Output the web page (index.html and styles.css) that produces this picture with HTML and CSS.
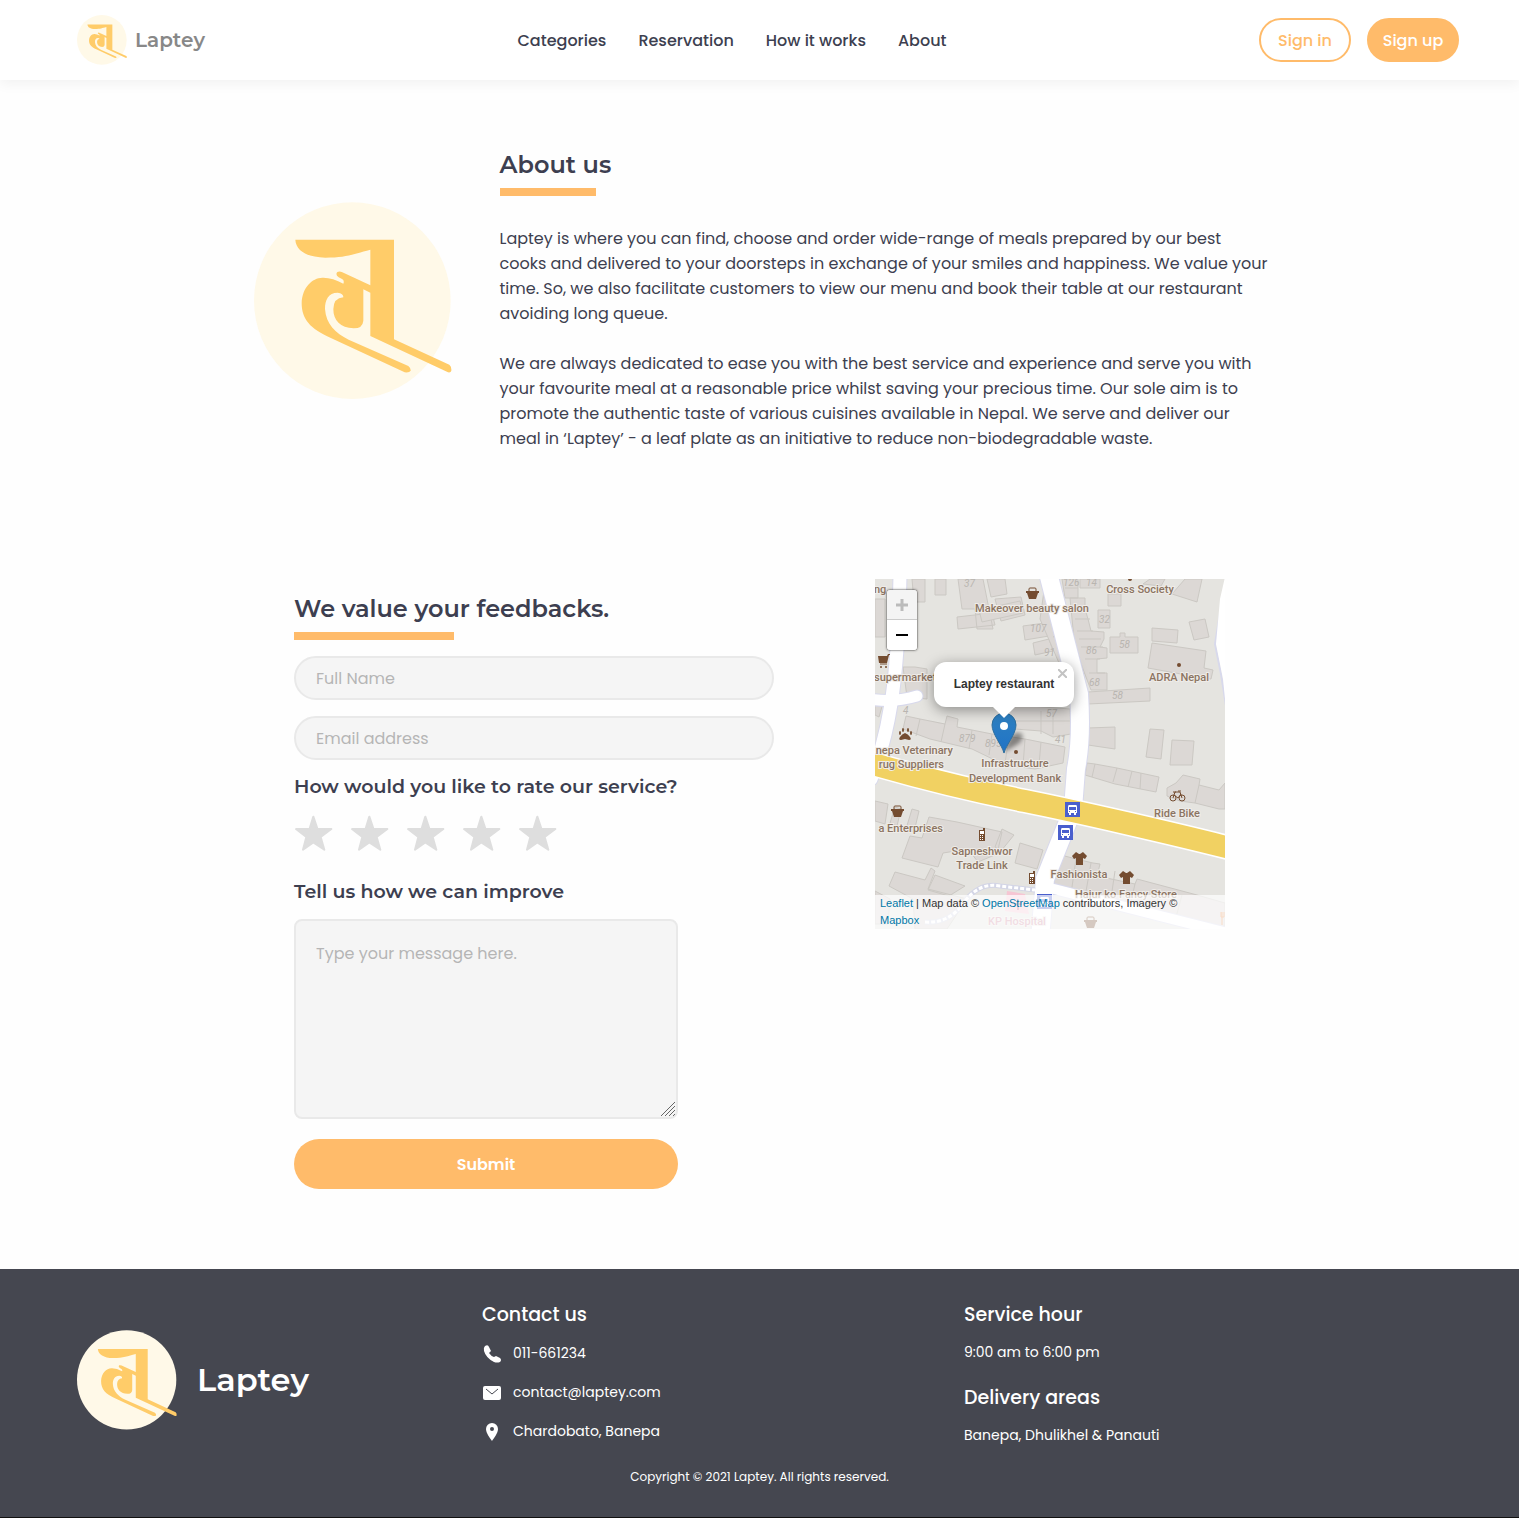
FILE: index.html
```html
<!DOCTYPE html>
<html lang="en">
<head>
<meta charset="utf-8">
<meta name="viewport" content="width=device-width, initial-scale=1">
<title>Laptey | About us</title>
<link rel="stylesheet" href="styles.css">
</head>
<body>
<svg class="sprite" aria-hidden="true">
  <symbol id="logo" viewBox="41 36 594 590">
    <circle cx="336" cy="330" r="295" fill="#fff9e8"/>
    <path fill="#ffcc69" d="M165 147H461V446L627 522Q634 527 633 540Q631 547 623 545L390 436V306L369 296V390Q367 413 340 413C300 411 279 390 279 355Q280 322 309 320Q310 309 292 306C264 306 254 328 254 355C257 400 285 427 325 447L504 526Q512 533 511 540Q507 547 493 545L270 441C210 415 184 385 184 337C186 290 215 262 246 261Q276 260 309 279Q313 269 305 265L295 260Q284 252 291 244Q298 241 306 245L390 284V177C340 190 320 201 255 201C200 200 167 180 165 147Z"/>
  </symbol>
  <symbol id="star" viewBox="42 706 120 120">
    <path d="M100 711L112 747L154 748L122 772L133 810L100 788L69 810L79 772L48 748L89 747Z" fill="currentColor" stroke="currentColor" stroke-width="6" stroke-linejoin="round"/>
  </symbol>
  <symbol id="basket" viewBox="0 0 13 13">
    <path d="M3 5V2Q3 1 4 1H9Q10 1 10 2V5" fill="none" stroke="currentColor"/>
    <path d="M0 4H13V6H12L10 12H3L1 6H0Z" fill="currentColor"/>
  </symbol>
  <symbol id="phone-shop" viewBox="0 0 8 13">
    <path d="M1 2H5V0H7V13H1Z" fill="currentColor"/>
    <path d="M2 3H6V6H2ZM2 7H3V8H2ZM4 7H5V8H4ZM2 9H3V10H2ZM4 9H5V10H4ZM2 11H3V12H2ZM4 11H5V12H4Z" fill="#fff"/>
  </symbol>
  <symbol id="shirt" viewBox="0 0 15 13">
    <path d="M4 0L7 2H8L11 0L15 4L13 7L11 6V13H4V6L2 7L0 4Z" fill="currentColor"/>
  </symbol>
  <symbol id="bus" viewBox="0 0 15 15">
    <path d="M0 0H15V15H0Z" fill="#4a5fcd"/>
    <path d="M4 3H11Q12 3 12 5V11H11V13H9V11H6V13H4V11H3V5Q3 3 4 3Z" fill="#fff"/>
    <path d="M4 5H11V8H4ZM4 9H5V10H4ZM10 9H11V10H10Z" fill="#4a5fcd"/>
  </symbol>
</svg>

<header class="topbar">
  <a class="brand" href="#"><svg class="brand-mark" aria-hidden="true"><use href="#logo"/></svg><span>Laptey</span></a>
  <nav class="menu" aria-label="Main">
    <a href="#">Categories</a>
    <a href="#">Reservation</a>
    <a href="#">How it works</a>
    <a href="#">About</a>
  </nav>
  <div class="account">
    <button class="pill pill-outline" type="button">Sign in</button>
    <button class="pill pill-solid" type="button">Sign up</button>
  </div>
</header>

<main>
  <section class="about">
    <svg class="about-mark" aria-hidden="true"><use href="#logo"/></svg>
    <div class="about-text">
      <h1 class="title">About us</h1>
      <p>Laptey is where you can find, choose and order wide-range of meals prepared by our best cooks and delivered to your doorsteps in exchange of your smiles and happiness. We value your time. So, we also facilitate customers to view our menu and book their table at our restaurant avoiding long queue.</p>
      <p>We are always dedicated to ease you with the best service and experience and serve you with your favourite meal at a reasonable price whilst saving your precious time. Our sole aim is to promote the authentic taste of various cuisines available in Nepal. We serve and deliver our meal in ‘Laptey’ - a leaf plate as an initiative to reduce non-biodegradable waste.</p>
    </div>
  </section>

  <section class="contact">
    <form class="feedback">
      <h2 class="title title-wide">We value your feedbacks.</h2>
      <input class="field" type="text" placeholder="Full Name" aria-label="Full Name">
      <input class="field" type="email" placeholder="Email address" aria-label="Email address">
      <fieldset class="rating">
        <legend class="question">How would you like to rate our service?</legend>
        <div class="stars">
          <label class="star"><input type="radio" name="rate" value="1" aria-label="1 star"><svg aria-hidden="true"><use href="#star"/></svg></label>
          <label class="star"><input type="radio" name="rate" value="2" aria-label="2 stars"><svg aria-hidden="true"><use href="#star"/></svg></label>
          <label class="star"><input type="radio" name="rate" value="3" aria-label="3 stars"><svg aria-hidden="true"><use href="#star"/></svg></label>
          <label class="star"><input type="radio" name="rate" value="4" aria-label="4 stars"><svg aria-hidden="true"><use href="#star"/></svg></label>
          <label class="star"><input type="radio" name="rate" value="5" aria-label="5 stars"><svg aria-hidden="true"><use href="#star"/></svg></label>
        </div>
      </fieldset>
      <label class="question" for="message">Tell us how we can improve</label>
      <div class="message-box">
        <textarea class="message" id="message" placeholder="Type your message here."></textarea>
        <svg class="grip" viewBox="0 0 16 16" aria-hidden="true"><path d="M1 15L15 1M5 15L15 5M9 15L15 9M13 15L15 13" stroke="#666"/></svg>
      </div>
      <button class="submit" type="submit">Submit</button>
    </form>

    <div class="map">
      <svg class="map-tiles" viewBox="0 0 350 350" role="img" aria-label="Map of Banepa">
        <rect width="350" height="350" fill="#e5e4e0"/>
        <!-- buildings -->
        <g fill="#dcd8d5" stroke="#cbc8c3">
          <path d="M0 20H10V58H0ZM37 0H50V23H39ZM60 0H71V16H60ZM83 0H108L118 50H102L100 30H87ZM112 0H130L132 15L116 18ZM82 38L117 34L120 46L83 50ZM120 20L146 18L150 36L126 42Z"/>
          <path d="M104 31L145 22L148 34L107 43ZM148 47L170 44L174 57L150 61ZM158 64L174 60L178 72L160 76ZM28 88H40L52 90V120L32 118ZM0 120L8 124L4 138L0 136Z"/>
          <path d="M31 137L45 140L70 145L72 137L83 140L82 148L97 151L117 155L150 160L190 168L188 184L160 190L130 186L97 170L55 160L28 150Z"/>
          <path d="M45 140L41 157M70 145L66 163M97 151L94 170M117 155L114 176M134 158L130 184M150 160L148 187M166 163L164 186" fill="none"/>
          <path d="M128 125L195 130L196 155L178 158L166 152L140 150ZM166 132V155M178 133V155M130 142H195"/>
          <path d="M170 5L184 3L196 60L200 90L184 84L165 40ZM174 25L190 20M176 42L192 37M178 58L196 52M184 72L198 68"/>
          <path d="M187 0H203V19H190ZM205 0H225V9H205ZM195 19H210V30L213 40L216 52L229 53V60L225 68L232 69V79L222 80L222 94L232 94V111H216L206 85L199 60Z"/>
          <path d="M190 9H203M197 30H211M200 40H215M202 52H218M204 60H226M206 68H228M210 80H225M214 94H230" fill="none"/>
          <path d="M233 15H246V27H233ZM223 31H235V49H223ZM235 58H245V54H250V58H263V74H235ZM277 49L303 51L302 64L277 62ZM314 43L330 40L334 58L319 61ZM277 64L331 72L329 89L338 91L336 100L328 99L273 89ZM213 113L275 109V122L213 125ZM213 149L240 148V170L213 166ZM275 150L289 151L286 180L271 178ZM297 161L319 162L317 186H295ZM297 15L310 0H327L322 23ZM268 5L275 0H290L286 7Z"/>
          <path d="M212 184L220 185L242 189L284 198L281 213L240 205L210 196ZM220 185L217 198M242 189L238 203M257 192L253 208M266 194L265 210M292 209L301 204L308 196L325 200L324 206L344 211L350 204V224L350 230L344 230L320 224L305 222L292 217ZM324 206L320 224"/>
          <path d="M0 222L13 225L10 245L0 242ZM20 228L26 230L22 247L15 244ZM37 230L44 232L39 253L31 250ZM54 238L82 243L127 253L122 275L103 283L93 270L68 274L63 288L27 279L35 257L47 259ZM127 250L139 256L126 272L120 268ZM145 264L168 271L162 290L140 284ZM20 293L50 301L56 289L60 292L53 310L92 320L72 350H40L38 320L14 307ZM0 312L15 320L13 345H0ZM60 296L90 307L74 317L53 311Z"/>
          <path d="M186 276L201 280L218 284L225 285L222 297L260 305L262 300L322 316L350 324V350H320L180 310L179 300ZM201 280L196 315M216 284L210 318M240 292L235 326M260 305L254 331M285 312L278 337M307 316L300 342"/>
        </g>
        <!-- streets -->
        <g fill="none" stroke-linecap="round">
          <path d="M25 -5C24 60 20 100 16 125C12 150 4 180 -4 200" stroke="#d8d9ec" stroke-width="15"/>
          <path d="M-10 119Q15 125 42 117" stroke="#d8d9ec" stroke-width="13"/>
          <path d="M172 -10L204 115Q207 160 201 190L198 230L170 300L165 360" stroke="#d8d9ec" stroke-width="20"/>
          <path d="M179 310L360 356" stroke="#d8d9ec" stroke-width="12"/>
          <path d="M355 -5L345 35L340 65Q350 110 355 160" stroke="#d8d9ec" stroke-width="2"/>
          <path d="M25 -5C24 60 20 100 16 125C12 150 4 180 -4 200" stroke="#fff" stroke-width="13"/>
          <path d="M-10 119Q15 125 42 117" stroke="#fff" stroke-width="11"/>
          <path d="M172 -10L204 115Q207 160 201 190L198 230L170 300L165 360" stroke="#fff" stroke-width="18"/>
          <path d="M179 310L360 356" stroke="#fff" stroke-width="10"/>
        </g>
        <path d="M350 -2L345 20L341 65L348 100L352 140Z" fill="#fff"/>
        <path d="M50 343Q75 345 90 322Q105 303 125 307L160 311" fill="none" stroke="#d3d5e6" stroke-width="5"/>
        <path d="M50 343Q75 345 90 322Q105 303 125 307L160 311" fill="none" stroke="#fff" stroke-width="3" stroke-dasharray="4 2"/>
        <path d="M-5 184C60 203 100 212 150 222S300 255 355 269" fill="none" stroke="#fff" stroke-width="25"/>
        <path d="M-5 184C60 203 100 212 150 222S300 255 355 269" fill="none" stroke="#f1d162" stroke-width="22"/>
        <path d="M132 312L150 315L154 335L130 332Z" fill="#f6c6d3"/>
        <path d="M139 325H147M143 321V331" stroke="#c76c88" stroke-width="2"/>
        <!-- house numbers -->
        <g class="map-number">
          <text x="89" y="8">37</text><text x="188" y="7">126</text><text x="211" y="7">14</text>
          <text x="224" y="44">32</text><text x="244" y="69">58</text><text x="211" y="75">86</text>
          <text x="155" y="53">107</text><text x="169" y="77">91</text><text x="214" y="107">68</text>
          <text x="237" y="120">58</text><text x="171" y="138">57</text><text x="180" y="164">41</text>
          <text x="28" y="135">4</text><text x="84" y="163">879</text><text x="110" y="168">895</text>
        </g>
        <!-- places -->
        <g class="map-label">
          <text x="-1" y="14">ng</text>
          <text x="157" y="33" text-anchor="middle">Makeover beauty salon</text>
          <text x="265" y="14" text-anchor="middle">Cross Society</text>
          <text x="304" y="102" text-anchor="middle">ADRA Nepal</text>
          <text x="-1" y="102">supermarket</text>
          <text x="78" y="175" text-anchor="end">nepa Veterinary</text>
          <text x="69" y="189" text-anchor="end">rug Suppliers</text>
          <text x="140" y="188" text-anchor="middle">Infrastructure</text>
          <text x="140" y="203" text-anchor="middle">Development Bank</text>
          <text x="68" y="253" text-anchor="end">a Enterprises</text>
          <text x="107" y="276" text-anchor="middle">Sapneshwor</text>
          <text x="107" y="290" text-anchor="middle">Trade Link</text>
          <text x="302" y="238" text-anchor="middle">Ride Bike</text>
          <text x="204" y="299" text-anchor="middle">Fashionista</text>
          <text x="251" y="319" text-anchor="middle">Hajur ko Fancy Store</text>
          <text class="map-hospital" x="142" y="346" text-anchor="middle">KP Hospital</text>
        </g>
        <g color="#744c30">
          <use href="#basket" x="151" y="8" width="13" height="13"/>
          <use href="#basket" x="16" y="226" width="13" height="13"/>
          <use href="#basket" x="209" y="337" width="13" height="13"/>
          <use href="#phone-shop" x="103" y="249" width="8" height="13"/>
          <use href="#phone-shop" x="153" y="292" width="8" height="13"/>
          <use href="#shirt" x="197" y="273" width="15" height="13"/>
          <use href="#shirt" x="244" y="292" width="15" height="13"/>
          <path d="M3 77H12L13 75H15V76H14L12 84H4Z" fill="currentColor"/>
          <path d="M5 85H12" stroke="currentColor"/>
          <circle cx="6" cy="88" r="1" fill="currentColor"/><circle cx="11" cy="88" r="1" fill="currentColor"/>
          <path d="M30 154Q33 155 35 158Q37 161 34 161L30 160L26 161Q23 161 25 158Q27 155 30 154Z" fill="currentColor"/>
          <g fill="currentColor"><ellipse cx="28" cy="151" rx="1" ry="2"/><ellipse cx="33" cy="151" rx="1" ry="2"/><ellipse cx="25" cy="154" rx="1" ry="2"/><ellipse cx="36" cy="154" rx="1" ry="2"/></g>
          <circle cx="304" cy="86" r="2" fill="currentColor"/>
          <circle cx="141" cy="173" r="2" fill="currentColor"/>
          <circle cx="255" cy="0" r="2" fill="currentColor"/>
          <g fill="none" stroke="currentColor"><circle cx="298" cy="219" r="3"/><circle cx="307" cy="219" r="3"/><path d="M298 219L300 213H305L307 219M299 216L303 219L306 215M298 213H301M303 212H306"/></g>
          <path d="M347 333V346M349 333V338H346V333" fill="none" stroke="#ec8b46"/>
        </g>
        <use href="#bus" x="190" y="223" width="15" height="15"/>
        <use href="#bus" x="183" y="246" width="15" height="15"/>
        <use href="#bus" x="162" y="315" width="15" height="15"/>
      </svg>

      <svg class="pin" viewBox="0 0 50 42" aria-hidden="true">
        <defs>
          <linearGradient id="pin-fill" x1="0" y1="0" x2="0" y2="1"><stop offset="0" stop-color="#2e80c0"/><stop offset="1" stop-color="#1f73c7"/></linearGradient>
          <filter id="soft" x="-50%" y="-50%" width="200%" height="200%"><feGaussianBlur stdDeviation="2"/></filter>
        </defs>
        <path d="M13 40L19 24Q26 18 31 22Q33 27 27 32Z" fill="#000" opacity=".4" filter="url(#soft)"/>
        <path d="M13 41C11 33 1 22 1 13A12 12 0 0 1 25 13C25 22 15 33 13 41Z" fill="url(#pin-fill)" stroke="#2d6f9f"/>
        <circle cx="13" cy="14" r="4" fill="#fff"/>
      </svg>

      <div class="popup">
        <strong>Laptey restaurant</strong>
        <button class="popup-close" type="button" aria-label="Close popup"><svg viewBox="0 0 9 9" aria-hidden="true"><path d="M0 0L9 9M9 0L0 9" stroke="#c3c3c3" stroke-width="2"/></svg></button>
      </div>

      <div class="zoom">
        <button type="button" disabled aria-label="Zoom in"><svg viewBox="0 0 12 12" aria-hidden="true"><path d="M0 6H12M6 0V12" stroke="#bbb" stroke-width="3"/></svg></button>
        <button type="button" aria-label="Zoom out"><svg viewBox="0 0 12 12" aria-hidden="true"><path d="M0 6H12" stroke="#000" stroke-width="2"/></svg></button>
      </div>

      <div class="credits"><a href="#">Leaflet</a> | Map data © <a href="#">OpenStreetMap</a> contributors, Imagery © <a href="#">Mapbox</a></div>
    </div>
  </section>
</main>

<footer class="footer">
  <div class="footer-columns">
    <div class="footer-brand"><svg class="footer-mark" aria-hidden="true"><use href="#logo"/></svg><span>Laptey</span></div>
    <div>
      <h3>Contact us</h3>
      <ul class="contacts">
        <li><svg viewBox="0 0 20 20" aria-hidden="true"><path d="M3 2Q6 0 7 3L9 7L7 9Q9 12 12 13L14 12L18 14Q20 16 18 18Q15 19 12 18Q4 14 2 7Q1 4 3 2Z" fill="#fff"/></svg>011-661234</li>
        <li><svg viewBox="0 0 20 20" aria-hidden="true"><rect x="1" y="3" width="18" height="14" rx="2" fill="#fff"/><path d="M4 6L10 11L16 6" fill="none" stroke="#454750"/></svg>contact@laptey.com</li>
        <li><svg viewBox="0 0 20 20" aria-hidden="true"><path fill-rule="evenodd" d="M10 1A6 6 0 0 0 4 7C4 11 8 16 10 19C12 16 16 11 16 7A6 6 0 0 0 10 1ZM10 5A2 2 0 0 1 10 9A2 2 0 0 1 10 5Z" fill="#fff"/></svg>Chardobato, Banepa</li>
      </ul>
    </div>
    <div>
      <h3>Service hour</h3>
      <p>9:00 am to 6:00 pm</p>
      <h3>Delivery areas</h3>
      <p>Banepa, Dhulikhel &amp; Panauti</p>
    </div>
  </div>
  <small class="copyright">Copyright © 2021 Laptey. All rights reserved.</small>
</footer>
</body>
</html>
```
FILE: styles.css
```css
* { box-sizing: border-box; }

body {
  margin: 0;
  background: #fefefe;
  color: #3d3f50;
  font: 400 16px/25px Poppins, Inter, sans-serif;
}

h1, h2, h3, p, ul, fieldset { margin: 0; padding: 0; border: 0; }
a { color: inherit; text-decoration: none; }
button, input, textarea { font: inherit; }
.sprite { position: absolute; width: 0; height: 0; }

.topbar {
  display: flex;
  align-items: center;
  justify-content: space-between;
  height: 80px;
  padding: 0 60px 0 77px;
  background: #fff;
  box-shadow: 0 4px 12px rgba(0, 0, 0, .05);
}
.brand { display: flex; align-items: center; gap: 8px; color: #888; font: 600 20px/30px Montserrat, Inter, sans-serif; }
.brand-mark { width: 50px; height: 50px; }
.menu { display: flex; gap: 32px; font-weight: 500; }
.account { display: flex; gap: 16px; }
.pill { width: 92px; height: 44px; padding: 0; border: 2px solid #ffbb6a; border-radius: 22px; font-weight: 500; }
.pill-outline { background: #fff; color: #ffbb6a; }
.pill-solid { background: #ffbb6a; color: #fff; }

.title { font: 600 24px/30px Montserrat, Inter, sans-serif; }
.title::after { content: ""; display: block; width: 96px; height: 8px; margin-top: 8px; background: #ffbb6a; }
.title-wide::after { width: 160px; }

.about { display: flex; align-items: center; gap: 48px; max-width: 1020px; margin: 0 auto; padding: 70px 0 128px 4px; }
.about-mark { flex: none; width: 198px; height: 198px; }
.about-text { display: grid; gap: 25px; }
.about-text .title { margin-bottom: 5px; }

.contact { display: flex; justify-content: space-between; align-items: flex-start; max-width: 931px; margin: 0 auto; padding-bottom: 80px; }
.feedback { width: 480px; padding-top: 15px; }
.field, .message { display: block; width: 100%; border: 2px solid #e9e9e9; background: #f5f5f5; color: #3d3f50; }
.field { height: 44px; margin-top: 16px; padding: 0 20px; border-radius: 22px; }
::placeholder { color: #b5b5b5; opacity: 1; }
.question { display: block; padding: 0; font: 600 19px/24px Montserrat, Inter, sans-serif; }
.rating { margin: 15px 0 25px; }
.stars { display: flex; gap: 16px; padding-top: 16px; }
.star { position: relative; width: 40px; height: 40px; color: #dedede; }
.star svg { display: block; width: 40px; height: 40px; }
.star input { position: absolute; inset: 0; margin: 0; opacity: 0; }
.message-box { position: relative; width: 384px; margin: 15px 0 20px; }
.message { height: 200px; padding: 20px; border-radius: 8px; resize: none; }
.grip { position: absolute; right: 2px; bottom: 2px; width: 16px; height: 16px; }
.submit { width: 384px; height: 50px; border: 0; border-radius: 25px; background: #ffbb6a; color: #fff; font-weight: 600; }

.map { position: relative; width: 350px; height: 350px; overflow: hidden; font: 12px/17px "Liberation Sans", sans-serif; color: #333; }
.map-tiles { display: block; width: 100%; height: 100%; }
.map-label { font: 500 11px Roboto, sans-serif; fill: #8b7462; stroke: #efece8; stroke-width: 2px; paint-order: stroke; }
.map-hospital { fill: #d08ca2; }
.map-number { font: italic 400 10px Roboto, sans-serif; fill: #b9b5b0; }
.pin { position: absolute; left: 116px; top: 133px; width: 50px; height: 42px; }
.popup { position: absolute; left: 59px; top: 83px; width: 140px; height: 45px; border-radius: 12px; background: #fff; box-shadow: 0 3px 14px rgba(0, 0, 0, .4); line-height: 45px; text-align: center; }
.popup::after { content: ""; position: absolute; left: 59px; top: 45px; border: 11px solid transparent; border-top-color: #fff; border-bottom: 0; }
.popup-close { position: absolute; top: 7px; right: 7px; display: flex; width: 9px; height: 9px; padding: 0; border: 0; background: none; }
.zoom { position: absolute; left: 11px; top: 10px; border: 1px solid rgba(0, 0, 0, .3); border-radius: 4px; background-clip: padding-box; box-shadow: 0 0 2px rgba(0, 0, 0, .3); }
.zoom button { display: grid; place-items: center; width: 30px; height: 30px; padding: 0; border: 0; border-radius: 0 0 3px 3px; background: #fff; }
.zoom button:first-child { background: #f4f4f4; border-bottom: 1px solid #ccc; border-radius: 3px 3px 0 0; }
.zoom svg { width: 12px; height: 12px; }
.credits { position: absolute; left: 0; right: 0; bottom: 0; padding: 0 30px 0 5px; background: rgba(255, 255, 255, .7); font-size: 11px; }
.credits a { color: #0078a8; }

.footer { padding: 31px 60px 28px 77px; border-bottom: 1px solid #111; background: #454750; color: #fff; font-size: 14px; }
.footer-columns { display: grid; grid-template-columns: 405fr 482fr 495fr; min-height: 160px; }
.footer-brand { display: flex; align-items: center; gap: 20px; font: 600 32px/40px Montserrat, Inter, sans-serif; }
.footer-mark { width: 100px; height: 100px; }
.footer h3 { font-size: 19px; line-height: 30px; font-weight: 500; }
.footer p { margin-top: 10px; }
.footer p + h3 { margin-top: 18px; }
.contacts { display: grid; gap: 14px; padding-top: 11px; list-style: none; }
.contacts li { display: flex; align-items: center; gap: 11px; }
.contacts svg { width: 20px; height: 20px; }
.copyright { display: block; margin: 4px 17px 0 0; font-size: 12px; text-align: center; }
```
